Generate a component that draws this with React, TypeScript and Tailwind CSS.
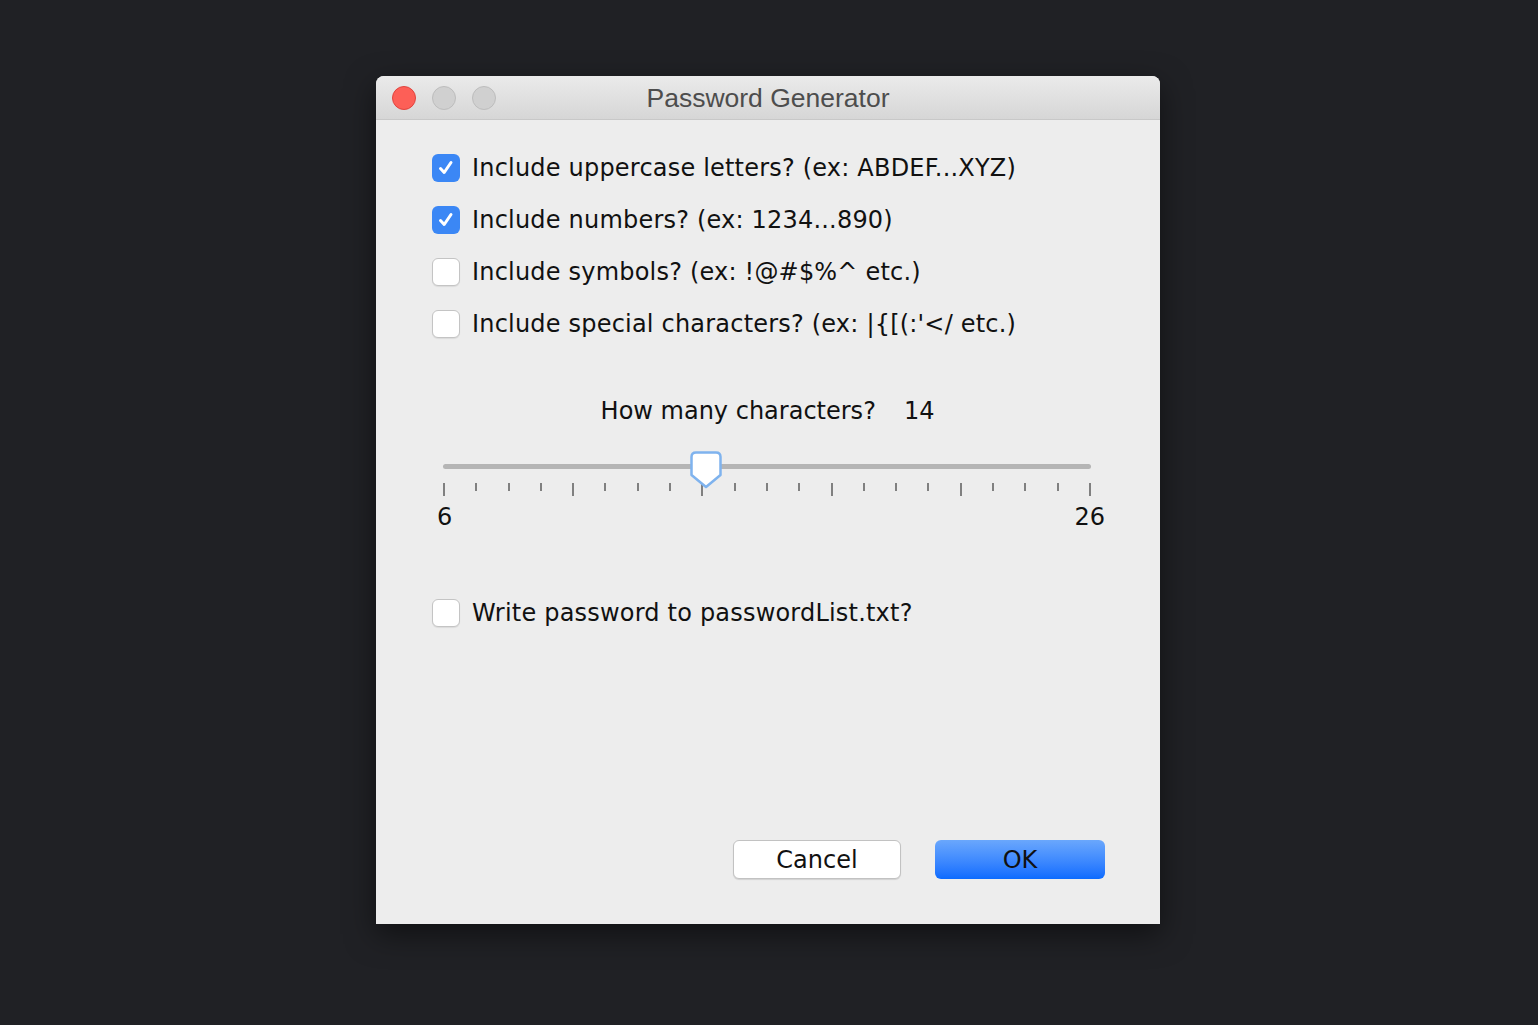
import React from "react";

const body = { fontFamily: '"DejaVu Sans", "Noto Sans", sans-serif' };

function Check({ checked }: { checked?: boolean }) {
  if (checked) {
    return (
      <div className="flex h-[28px] w-[28px] shrink-0 items-center justify-center rounded-[6px] bg-[#3b87f5]">
        <svg width="20" height="20" viewBox="0 0 20 20">
          <path d="M4.5 10.5 L8.2 14.5 L15 4.5" fill="none" stroke="#fff" strokeWidth="3" strokeLinecap="round" strokeLinejoin="round" />
        </svg>
      </div>
    );
  }
  return <div className="h-[28px] w-[28px] shrink-0 rounded-[6px] border border-[#c4c4c4] bg-white shadow-[0_1px_1px_rgba(0,0,0,0.08)]" />;
}

function Row({ label, checked }: { label: string; checked?: boolean }) {
  return (
    <div className="flex h-[52px] items-center gap-[12px]">
      <Check checked={checked} />
      <span className="text-[24px] tracking-[0.2px] text-[#111]">{label}</span>
    </div>
  );
}

const ticks = Array.from({ length: 21 }, (_, i) => i);

function Slider() {
  return (
    <div className="relative ml-[11px] w-[648px]">
      <div className="h-[38px]" />
      <div className="h-[5px] rounded-full bg-[#b5b5b5]" />
      <div className="mt-[14px] flex items-start justify-between">
        {ticks.map((i) => (
          <div key={i} className={i % 4 === 0 ? "h-[13px] w-[2px] bg-[#808080]" : "h-[8px] w-[2px] bg-[#808080]"} />
        ))}
      </div>
      <div className="mt-[3px] flex justify-between text-[24px] text-[#111]">
        <span className="-ml-[6px]">6</span>
        <span className="-mr-[14px]">26</span>
      </div>
      <svg className="absolute left-[247px] top-[25px]" width="32" height="38" viewBox="0 0 32 38">
        <path d="M6 1.5 H26 Q30.5 1.5 30.5 6 V24 L16 36 L1.5 24 V6 Q1.5 1.5 6 1.5 Z" fill="#fff" stroke="#7fb3ee" strokeWidth="2.5" strokeLinejoin="round" />
      </svg>
    </div>
  );
}

export default function App() {
  return (
    <div className="min-h-[1025px] w-full bg-[#202125] pl-[376px] pt-[76px]" style={body}>
      <div className="flex h-[848px] w-[784px] flex-col overflow-hidden rounded-t-[8px] bg-[#ededed] shadow-[0_10px_30px_rgba(0,0,0,0.5)]">
        <div className="relative flex h-[44px] shrink-0 items-center border-b border-[#c8c8c8] bg-gradient-to-b from-[#ebebeb] to-[#d6d6d6] px-[16px]">
          <div className="flex gap-[16px]">
            <div className="h-[24px] w-[24px] rounded-full border border-[#e0443e] bg-[#fd5f57]" />
            <div className="h-[24px] w-[24px] rounded-full border border-[#bdbdbd] bg-[#d0d0d0]" />
            <div className="h-[24px] w-[24px] rounded-full border border-[#bdbdbd] bg-[#d0d0d0]" />
          </div>
          <div
            className="absolute inset-0 flex items-center justify-center pt-[2px] text-[26.5px] text-[#4d4d4d]"
            style={{ fontFamily: '"Liberation Sans", Arial, sans-serif' }}
          >
            Password Generator
          </div>
        </div>
        <div className="flex flex-1 flex-col pl-[56px] pr-[56px] pt-[22px]">
          <Row checked label="Include uppercase letters? (ex: ABDEF...XYZ)" />
          <Row checked label="Include numbers? (ex: 1234...890)" />
          <Row label="Include symbols? (ex: !@#$%^ etc.)" />
          <Row label="Include special characters? (ex: |{[(:'</ etc.)" />
          <div className="mt-[46px] flex justify-center pr-[1px] text-[24px] leading-[30px] text-[#111]">
            <span>How many characters?</span>
            <span className="ml-[28px]">14</span>
          </div>
          <Slider />
          <div className="mt-[52px]">
            <Row label="Write password to passwordList.txt?" />
          </div>
          <div className="mt-auto mb-[45px] flex justify-end gap-[34px] -mr-[1px]">
            <button className="h-[39px] w-[168px] rounded-[6px] border border-[#c2c2c2] bg-white text-[24px] text-[#111] shadow-[0_1px_1px_rgba(0,0,0,0.12)]">
              Cancel
            </button>
            <button className="h-[39px] w-[170px] rounded-[6px] bg-gradient-to-b from-[#6aa7fc] to-[#0a6bff] text-[24px] text-[#111]">
              OK
            </button>
          </div>
        </div>
      </div>
    </div>
  );
}
